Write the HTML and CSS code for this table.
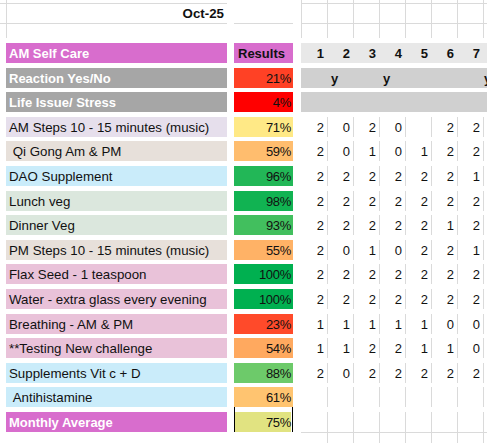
FILE: index.html
```html
<!DOCTYPE html>
<html>
<head>
<meta charset="utf-8">
<title>AM Self Care</title>
<link rel="stylesheet" href="styles.css">
</head>
<body>
<div class="sheet">
  <div class="row top0"><div class="a"></div><div class="lbl"></div><div class="gap"></div><div class="res"></div><div class="gap"></div><div class="d"></div><div class="d"></div><div class="d"></div><div class="d"></div><div class="d"></div><div class="d"></div><div class="d"></div><div class="d"></div></div>
  <div class="row top1"><div class="a"></div><div class="lbl month">Oct-25</div><div class="gap"></div><div class="res"></div><div class="gap"></div><div class="d"></div><div class="d"></div><div class="d"></div><div class="d"></div><div class="d"></div><div class="d"></div><div class="d"></div><div class="d"></div></div>
  <div class="row top2"><div class="a"></div><div class="lbl"></div><div class="gap"></div><div class="res"></div><div class="gap"></div><div class="d"></div><div class="d"></div><div class="d"></div><div class="d"></div><div class="d"></div><div class="d"></div><div class="d"></div><div class="d"></div></div>

  <div class="row data band-head"><div class="a"></div><div class="lbl orchid strong">AM Self Care</div><div class="gap"></div><div class="res orchid res-head">Results</div><div class="gap"></div><div class="d">1</div><div class="d">2</div><div class="d">3</div><div class="d">4</div><div class="d">5</div><div class="d">6</div><div class="d">7</div><div class="d"></div></div>

  <div class="row data band-gray"><div class="a"></div><div class="lbl grey strong">Reaction Yes/No</div><div class="gap"></div><div class="res c21">21%</div><div class="gap"></div><div class="d"></div><div class="d">y</div><div class="d"></div><div class="d">y</div><div class="d"></div><div class="d"></div><div class="d"></div><div class="d last-y">y</div></div>

  <div class="row data band-gray"><div class="a"></div><div class="lbl grey strong">Life Issue/ Stress</div><div class="gap"></div><div class="res c4">4%</div><div class="gap"></div><div class="d"></div><div class="d"></div><div class="d"></div><div class="d"></div><div class="d"></div><div class="d"></div><div class="d"></div><div class="d"></div></div>

  <div class="row data grid"><div class="a"></div><div class="lbl lav">AM Steps 10 - 15 minutes (music)</div><div class="gap"></div><div class="res c71">71%</div><div class="gap"></div><div class="d">2</div><div class="d">0</div><div class="d">2</div><div class="d">0</div><div class="d"></div><div class="d">2</div><div class="d">2</div><div class="d"></div></div>

  <div class="row data grid"><div class="a"></div><div class="lbl beige">&nbsp;Qi Gong Am &amp; PM</div><div class="gap"></div><div class="res c59">59%</div><div class="gap"></div><div class="d">2</div><div class="d">0</div><div class="d">1</div><div class="d">0</div><div class="d">1</div><div class="d">2</div><div class="d">2</div><div class="d"></div></div>

  <div class="row data grid"><div class="a"></div><div class="lbl sky">DAO Supplement</div><div class="gap"></div><div class="res c96">96%</div><div class="gap"></div><div class="d">2</div><div class="d">2</div><div class="d">2</div><div class="d">2</div><div class="d">2</div><div class="d">2</div><div class="d">1</div><div class="d"></div></div>

  <div class="row data grid"><div class="a"></div><div class="lbl sage">Lunch veg</div><div class="gap"></div><div class="res c98">98%</div><div class="gap"></div><div class="d">2</div><div class="d">2</div><div class="d">2</div><div class="d">2</div><div class="d">2</div><div class="d">2</div><div class="d">2</div><div class="d"></div></div>

  <div class="row data grid"><div class="a"></div><div class="lbl sage">Dinner Veg</div><div class="gap"></div><div class="res c93">93%</div><div class="gap"></div><div class="d">2</div><div class="d">2</div><div class="d">2</div><div class="d">2</div><div class="d">2</div><div class="d">1</div><div class="d">2</div><div class="d"></div></div>

  <div class="row data grid"><div class="a"></div><div class="lbl beige">PM Steps 10 - 15 minutes (music)</div><div class="gap"></div><div class="res c55">55%</div><div class="gap"></div><div class="d">2</div><div class="d">0</div><div class="d">1</div><div class="d">0</div><div class="d">2</div><div class="d">2</div><div class="d">1</div><div class="d"></div></div>

  <div class="row data grid"><div class="a"></div><div class="lbl pink">Flax Seed - 1 teaspoon</div><div class="gap"></div><div class="res c100">100%</div><div class="gap"></div><div class="d">2</div><div class="d">2</div><div class="d">2</div><div class="d">2</div><div class="d">2</div><div class="d">2</div><div class="d">2</div><div class="d"></div></div>

  <div class="row data grid"><div class="a"></div><div class="lbl pink">Water - extra glass every evening</div><div class="gap"></div><div class="res c100">100%</div><div class="gap"></div><div class="d">2</div><div class="d">2</div><div class="d">2</div><div class="d">2</div><div class="d">2</div><div class="d">2</div><div class="d">2</div><div class="d"></div></div>

  <div class="row data grid"><div class="a"></div><div class="lbl pink">Breathing - AM &amp; PM</div><div class="gap"></div><div class="res c23">23%</div><div class="gap"></div><div class="d">1</div><div class="d">1</div><div class="d">1</div><div class="d">1</div><div class="d">1</div><div class="d">0</div><div class="d">0</div><div class="d"></div></div>

  <div class="row data grid"><div class="a"></div><div class="lbl pink">**Testing New challenge</div><div class="gap"></div><div class="res c54">54%</div><div class="gap"></div><div class="d">1</div><div class="d">1</div><div class="d">2</div><div class="d">2</div><div class="d">1</div><div class="d">1</div><div class="d">0</div><div class="d"></div></div>

  <div class="row data grid"><div class="a"></div><div class="lbl sky">Supplements Vit c + D</div><div class="gap"></div><div class="res c88">88%</div><div class="gap"></div><div class="d">2</div><div class="d">0</div><div class="d">2</div><div class="d">2</div><div class="d">2</div><div class="d">2</div><div class="d">2</div><div class="d"></div></div>

  <div class="row data grid"><div class="a"></div><div class="lbl sky">&nbsp;Antihistamine</div><div class="gap"></div><div class="res c61">61%</div><div class="gap"></div><div class="d"></div><div class="d"></div><div class="d"></div><div class="d"></div><div class="d"></div><div class="d"></div><div class="d"></div><div class="d"></div></div>

  <div class="row data grid"><div class="a"></div><div class="lbl orchid strong">Monthly Average</div><div class="gap"></div><div class="res c75 avg">75%</div><div class="gap"></div><div class="d"></div><div class="d"></div><div class="d"></div><div class="d"></div><div class="d"></div><div class="d"></div><div class="d"></div><div class="d"></div></div>

  <div class="row tail"><div class="a"></div><div class="lbl"></div><div class="gap"></div><div class="res"></div><div class="gap"></div><div class="d"></div><div class="d"></div><div class="d"></div><div class="d"></div><div class="d"></div><div class="d"></div><div class="d"></div><div class="d"></div></div>
</div>
</body>
</html>
```

FILE: styles.css
```css
* { box-sizing: border-box; }

html, body {
  margin: 0;
  padding: 0;
  background: #ffffff;
  overflow: hidden;
}

body {
  width: 487px;
  height: 443px;
  font-family: "Liberation Sans", Arial, sans-serif;
  color: #111111;
}

.sheet {
  width: 509px;
}

.row {
  display: grid;
  grid-template-columns: 6px 221px 7px 59px 8px repeat(8, 26px);
}

/* top blank rows with gridlines */
.top0 { height: 3px; }
.top1 { height: 21px; }
.top2 { height: 14.4px; }

.top0 .lbl, .top1 .lbl, .top2 .lbl,
.top0 .d, .top1 .d, .top2 .d {
  border-left: 1px solid #dadada;
}

.top1 .a, .top1 .lbl, .top1 .d {
  border-top: 1px solid #dadada;
  border-bottom: 1px solid #dadada;
}

.top1 .res {
  border-bottom: 1px solid #dadada;
}

.month {
  text-align: right;
  font-weight: bold;
  font-size: 13px;
  line-height: 19px;
  padding-right: 3px;
}

/* data rows */
.data {
  height: 24.6px;
  padding-top: 4.6px;
  grid-template-rows: 20px;
}

.data > div {
  height: 20px;
  line-height: 22px;
  white-space: nowrap;
}

.lbl {
  padding-left: 3px;
  font-size: 13.3px;
}

.strong {
  font-weight: bold;
  font-size: 13px;
  color: #ffffff;
}

.orchid { background: #d86dcd; }
.grey { background: #a6a6a6; }
.lav { background: #e6dfec; }
.beige { background: #e7e0da; }
.sky { background: #caecfa; }
.sage { background: #dbe7dd; }
.pink { background: #e9c2d9; }

.res {
  text-align: right;
  padding-right: 2px;
  font-size: 13px;
  letter-spacing: -0.3px;
  color: #111111;
}

.res-head {
  text-align: left;
  padding-left: 4px;
  font-weight: bold;
  letter-spacing: 0;
  color: #111111;
}

.c21 { background: #ff4125; }
.c4 { background: #ff0000; }
.c71 { background: #ffe986; }
.c59 { background: #ffbd6e; }
.c96 { background: #22b757; }
.c98 { background: #11b352; }
.c93 { background: #42bf5e; }
.c55 { background: #ffb266; }
.c100 { background: #00b050; }
.c23 { background: #ff4a2a; }
.c54 { background: #ffa95f; }
.c88 { background: #6dca6a; }
.c61 { background: #ffc470; }
.c75 { background: #e1e381; }

.data > .avg {
  margin-top: -4.6px;
  height: 24.6px;
  padding-top: 4.6px;
  background-clip: content-box;
  box-shadow: inset 1px 0 #000000, inset -1px 0 #000000;
}

/* day cells */
.d {
  font-size: 13px;
  text-align: right;
  padding-right: 3px;
}

.band-head .d {
  background: #e8e8e8;
  font-weight: bold;
}

.band-gray .d {
  background: #d0d0d0;
  text-align: left;
  padding-left: 4px;
  font-weight: bold;
}

.band-gray .last-y {
  padding-left: 1px;
}

.grid .d + .d {
  border-left: 1px solid #dadada;
}

.tail { height: 11px; }

.tail .d {
  border-top: 1px solid #dadada;
}

.tail .d + .d {
  border-left: 1px solid #dadada;
}
```
